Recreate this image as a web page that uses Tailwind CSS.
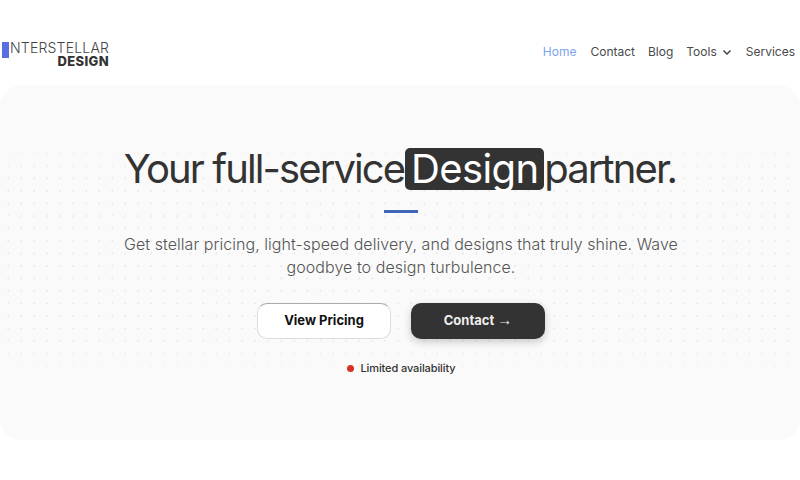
<!DOCTYPE html>
<html lang="en">

<head>
    <meta charset="UTF-8">
    <meta name="viewport" content="width=device-width, initial-scale=1.0">
    <title>Interstellar Design</title>
    <script src="https://cdn.jsdelivr.net/npm/@tailwindcss/browser@4"></script>
</head>

<body class="bg-white h-[480px] overflow-hidden font-['Inter',sans-serif]">
    <!-- Header -->
    <header class="h-[85px] flex justify-between items-center pl-[2px] pr-[5px] pt-[18px]">
        <div class="flex items-start mt-[6px]">
            <div class="w-[7px] h-[16px] bg-[#5b70e0]"></div>
            <div class="flex flex-col items-end ml-[1px] -mt-[1px]">
                <span class="text-[14px] leading-[14px] tracking-[0.2px] font-light text-[#444]">NTERSTELLAR</span>
                <span class="text-[13px] leading-[12px] font-extrabold tracking-[0.4px] text-[#333]">DESIGN</span>
            </div>
        </div>
        <nav class="flex items-center gap-[13px] text-[12px] text-[#4a4a4a]">
            <a class="text-[#7ea3ef] mr-[1px]">Home</a>
            <a>Contact</a>
            <a>Blog</a>
            <a class="flex items-center gap-[5px] mr-[1px]">Tools
                <svg width="10" height="10" viewBox="0 0 10 10" fill="none" stroke="#444" stroke-width="1.5"><path d="M1.5 3.5 5 7l3.5-3.5"/></svg>
            </a>
            <a>Services</a>
        </nav>
    </header>

    <!-- Hero -->
    <section class="relative h-[355px] rounded-[22px] bg-[#fafafa] flex flex-col items-center pt-[62px] overflow-hidden">
        <div class="absolute inset-0 bg-[radial-gradient(#e8e8e8_1px,transparent_1px)] bg-[size:13px_12.5px] bg-[position:2px_0px] [mask-image:linear-gradient(to_bottom,transparent_15%,black_25%,black_70%,transparent_85%)]"></div>

        <h1 class="relative flex items-center text-[40px] leading-[44px] tracking-[-1.9px] text-[#333]">
            Your full-service
            <span class="bg-[#333] text-white rounded-[5px] h-[42px] w-[139px] ml-[1px] tracking-[-0.6px] flex items-center justify-center">Design</span>
            partner.
        </h1>
        <div class="relative w-[34px] h-[3px] bg-[#3f66b8] mt-[19px] ml-[2px]"></div>
        <p class="relative w-[600px] mt-[20px] text-center text-[16px] leading-[23px] tracking-[0.05px] font-light text-[#555] ml-[2px]">
            Get stellar pricing, light-speed delivery, and designs that truly shine. Wave goodbye to design turbulence.
        </p>
        <div class="relative flex gap-[20px] mt-[24px] ml-[2px]">
            <button class="w-[134px] h-[36px] bg-white border border-[#ddd] border-t-[#aaa] rounded-[10px] text-[13px] font-bold text-[#111]">View Pricing</button>
            <button class="w-[134px] h-[36px] bg-[#333] rounded-[10px] text-[13px] font-bold text-[#eee] shadow-[0_3px_8px_rgba(0,0,0,0.2)]">Contact <span class="font-normal leading-none font-['Liberation_Sans',sans-serif] text-[15px]">→</span></button>
        </div>
        <div class="relative flex items-center gap-[6px] mt-[21px] ml-[3px] text-[11px] font-medium tracking-[-0.1px] text-[#333]">
            <span class="w-[7px] h-[7px] rounded-full bg-[#d93025]"></span>
            Limited availability
        </div>
    </section>
</body>

</html>
